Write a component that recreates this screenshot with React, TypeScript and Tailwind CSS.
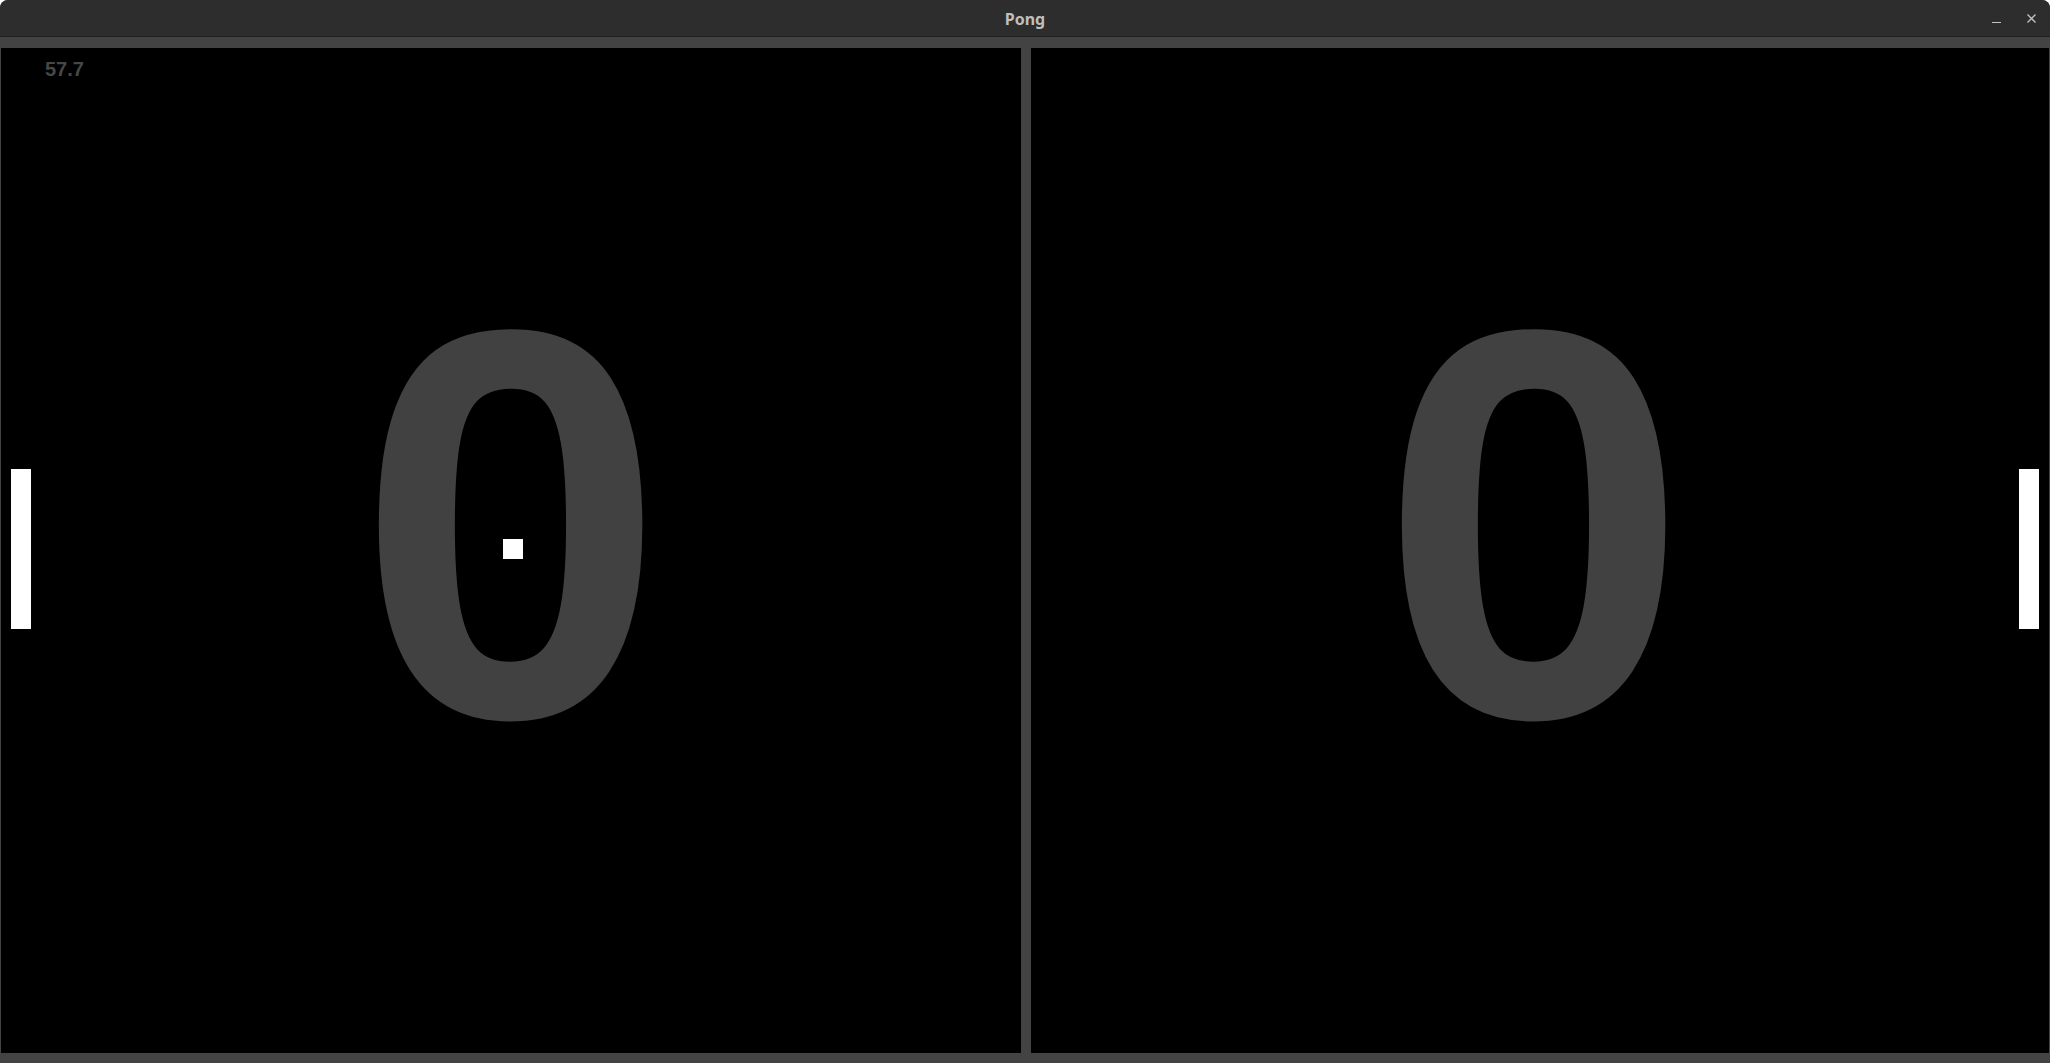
import React from 'react';

const Paddle = ({ side }: { side: 'left' | 'right' }) => (
  <div
    className={`absolute top-[421px] w-[20px] h-[160px] bg-white ${
      side === 'left' ? 'left-[10px]' : 'right-[10px]'
    }`}
  />
);

const Score = ({ value, shift }: { value: number; shift?: boolean }) => (
  <div
    className={`flex-1 flex items-center justify-center pb-[54px] ${shift ? 'pr-[12px]' : ''}`}
  >
    <span className="font-['Liberation_Sans',Arial,sans-serif] font-bold text-[554px] leading-none text-[#414141] select-none">
      {value}
    </span>
  </div>
);

const App = () => {
  return (
    <div className="w-full h-[1063px] bg-white">
      <div className="w-full h-full flex flex-col rounded-t-[8px] overflow-hidden bg-[#434343]">
        {/* title bar */}
        <div className="h-[37px] shrink-0 flex items-center relative bg-[#2d2d2d] border-b border-[#1f1f1f]">
          <div className="flex-1 text-center font-['Noto_Sans',sans-serif] font-bold text-[16px] text-[#bfbfbf] pt-[1px]">
            Pong
          </div>
          <div className="absolute right-[14px] top-0 h-full flex items-center gap-[26px]">
            <svg width="9" height="9" viewBox="0 0 9 9" className="mt-[2px]">
              <line x1="0" y1="7.5" x2="9" y2="7.5" stroke="#c4c4c4" strokeWidth="1" />
            </svg>
            <svg width="9" height="9" viewBox="0 0 9 9" className="mt-[1px]">
              <path d="M0.5 0.5 L8.5 8.5 M8.5 0.5 L0.5 8.5" stroke="#c4c4c4" strokeWidth="1.3" />
            </svg>
          </div>
        </div>

        {/* game area */}
        <div className="flex-1 flex pt-[11px] pb-[10px] px-[1px] gap-[10px]">
          <div className="relative w-[1020px] bg-black flex">
            <div className="absolute left-[44px] top-[6px] font-['Liberation_Sans',Arial,sans-serif] font-bold text-[20px] text-[#474747]">
              57.7
            </div>
            <Score value={0} />
            <Paddle side="left" />
            <div className="absolute left-[502px] top-[491px] w-[20px] h-[20px] bg-white" />
          </div>
          <div className="relative flex-1 bg-black flex">
            <Score value={0} shift />
            <Paddle side="right" />
          </div>
        </div>
      </div>
    </div>
  );
};

export default App;
